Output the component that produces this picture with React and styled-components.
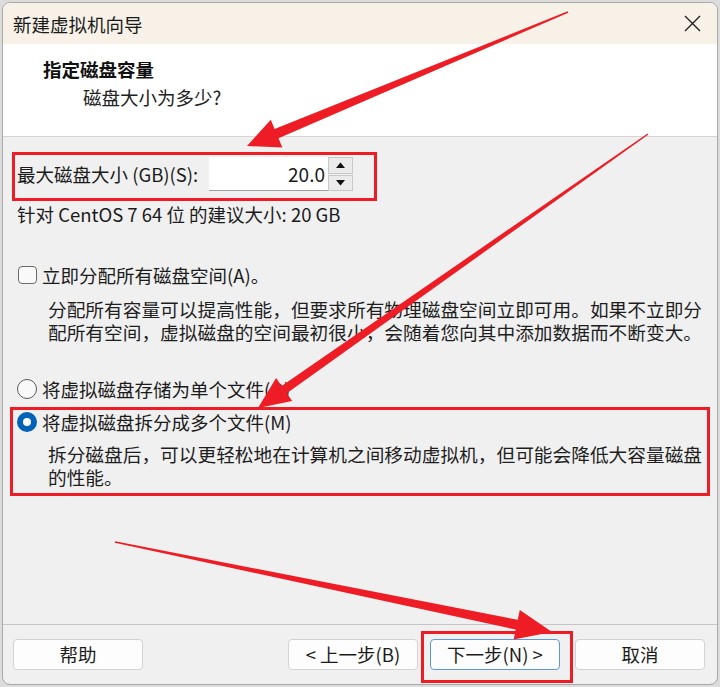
import React from 'react';
import styled, { createGlobalStyle } from 'styled-components';

const GlobalStyle = createGlobalStyle`
  html, body {
    margin: 0;
    padding: 0;
    background: #dcdcdc;
  }
  body {
    font-family: "Noto Sans CJK SC", "Noto Sans", sans-serif;
    color: #1b1b1b;
  }
  * {
    box-sizing: border-box;
  }
`;

const RED = '#ee1c24';

const Page = styled.div`
  width: 720px;
  height: 687px;
  padding: 2px 2px 0 2px;
  position: relative;
`;

const Window = styled.div`
  width: 716px;
  height: 683px;
  border: 1px solid #a9a9a9;
  border-radius: 8px;
  overflow: hidden;
  display: flex;
  flex-direction: column;
  background: #f0f0f0;
`;

const TitleBar = styled.div`
  height: 41px;
  flex: none;
  background: #f8f1e7;
  display: flex;
  align-items: center;
  justify-content: space-between;
  padding: 0 16px 0 10px;
  font-size: 18.5px;
  color: #1a1a1a;
`;

const CloseIcon = () => (
  <svg width="17" height="17" viewBox="0 0 17 17">
    <path d="M1 1 L16 16 M16 1 L1 16" stroke="#222" strokeWidth="1.4" fill="none" />
  </svg>
);

const Header = styled.div`
  height: 93px;
  flex: none;
  background: #ffffff;
  border-bottom: 1px solid #d4d4d4;
  padding: 13px 0 0 40px;
`;

const HeaderTitle = styled.div`
  font-size: 18.5px;
  font-weight: 700;
  line-height: 24px;
  color: #111;
`;

const HeaderSub = styled.div`
  font-size: 18.5px;
  line-height: 24px;
  margin: 4px 0 0 40px;
  color: #222;
`;

const Body = styled.div`
  flex: 1;
  display: flex;
  flex-direction: column;
  padding: 0 14px;
  font-size: 18.5px;
`;

const SizeRow = styled.div`
  margin-top: 20px;
  height: 34px;
  display: flex;
  align-items: center;
`;

const SizeLabel = styled.span`
  width: 192px;
  line-height: 24px;
`;

const NumberBox = styled.div`
  width: 119px;
  height: 34px;
  background: #fff;
  border-bottom: 1px solid #a0a0a0;
  text-align: right;
  padding-right: 3px;
  line-height: 33px;
  font-size: 19px;
`;

const Spinner = styled.div`
  width: 25px;
  height: 34px;
  display: flex;
  flex-direction: column;
  gap: 1px;
`;

const SpinButton = styled.div`
  flex: 1;
  background: #ebebeb;
  border: 1px solid #c9c9c9;
  display: flex;
  align-items: center;
  justify-content: center;
`;

const Tri = ({ up }) => (
  <svg width="9" height="6" viewBox="0 0 9 6">
    <path d={up ? 'M0 6 L4.5 0.5 L9 6 Z' : 'M0 0 L4.5 5.5 L9 0 Z'} fill="#111" />
  </svg>
);

const Line = styled.div`
  line-height: 24px;
  margin-top: ${p => p.$top || 0}px;
`;

const OptionRow = styled.div`
  display: flex;
  align-items: center;
  gap: 5px;
  height: 24px;
  margin-top: ${p => p.$top || 0}px;
`;

const CheckBox = styled.span`
  width: 19px;
  height: 18px;
  flex: none;
  border: 1px solid #6a6a6a;
  border-radius: 4px;
  background: #f9f9f9;
  margin-left: 1px;
`;

const Radio = styled.span`
  width: 20px;
  height: 20px;
  flex: none;
  border-radius: 50%;
  border: ${p => (p.$checked ? '6px solid #0063b8' : '1.5px solid #5a5a5a')};
  background: ${p => (p.$checked ? '#fff' : '#f9f9f9')};
`;

const Desc = styled.div`
  margin: ${p => p.$top || 0}px 0 0 31px;
  line-height: 23px;
  font-size: 18.7px;
  color: #1e1e1e;
`;

const Footer = styled.div`
  flex: none;
  height: 60px;
  border-top: 1px solid #c4c4c4;
  display: flex;
  align-items: flex-start;
  padding: 14px 12px 0 10px;
`;

const Button = styled.button`
  width: 130px;
  height: 31px;
  margin-left: ${p => p.$gap || 0}px;
  background: #fdfdfd;
  border: 1px solid ${p => (p.$primary ? '#5b9bd5' : '#d3d3d3')};
  border-radius: 4px;
  font-family: inherit;
  font-size: 18.5px;
  color: #1b1b1b;
  padding: 0;
  line-height: 29px;
`;

const Spacer = styled.div`
  flex: 1;
`;

const Overlay = styled.svg`
  position: absolute;
  top: 0;
  left: 0;
  pointer-events: none;
`;

function arrowPoints(x1, y1, x2, y2, headLen, headW, tailW, neckW) {
  const dx = x2 - x1;
  const dy = y2 - y1;
  const len = Math.hypot(dx, dy);
  const ux = dx / len;
  const uy = dy / len;
  const px = -uy;
  const py = ux;
  const bx = x2 - ux * headLen;
  const by = y2 - uy * headLen;
  const pts = [
    [x1 + px * tailW / 2, y1 + py * tailW / 2],
    [bx + px * neckW / 2, by + py * neckW / 2],
    [bx + px * headW / 2, by + py * headW / 2],
    [x2, y2],
    [bx - px * headW / 2, by - py * headW / 2],
    [bx - px * neckW / 2, by - py * neckW / 2],
    [x1 - px * tailW / 2, y1 - py * tailW / 2],
  ];
  return pts.map(p => p.map(v => v.toFixed(1)).join(',')).join(' ');
}

const arrows = [
  [568, 12, 247, 146, 32, 30, 1.5, 10],
  [648, 134, 258, 408, 32, 28, 1.5, 9],
  [115, 542, 552, 632, 36, 30, 1.5, 10],
];

const boxes = [
  [13.5, 153.5, 362, 46],
  [11.5, 408.5, 697, 86],
  [422.5, 632.5, 149, 49],
];

export default function App() {
  return (
    <Page>
      <GlobalStyle />
      <Window>
        <TitleBar>
          <span>新建虚拟机向导</span>
          <CloseIcon />
        </TitleBar>
        <Header>
          <HeaderTitle>指定磁盘容量</HeaderTitle>
          <HeaderSub>磁盘大小为多少?</HeaderSub>
        </Header>
        <Body>
          <SizeRow>
            <SizeLabel>最大磁盘大小 (GB)(S):</SizeLabel>
            <NumberBox>20.0</NumberBox>
            <Spinner>
              <SpinButton><Tri up /></SpinButton>
              <SpinButton><Tri /></SpinButton>
            </Spinner>
          </SizeRow>
          <Line $top={11}>针对 CentOS 7 64 位 的建议大小: 20 GB</Line>
          <OptionRow $top={37}>
            <CheckBox />
            <span>立即分配所有磁盘空间(A)。</span>
          </OptionRow>
          <Desc $top={10}>
            分配所有容量可以提高性能，但要求所有物理磁盘空间立即可用。如果不立即分
            <br />
            配所有空间，虚拟磁盘的空间最初很小，会随着您向其中添加数据而不断变大。
          </Desc>
          <OptionRow $top={34}>
            <Radio />
            <span>将虚拟磁盘存储为单个文件(O)</span>
          </OptionRow>
          <OptionRow $top={9}>
            <Radio $checked />
            <span>将虚拟磁盘拆分成多个文件(M)</span>
          </OptionRow>
          <Desc $top={8}>
            拆分磁盘后，可以更轻松地在计算机之间移动虚拟机，但可能会降低大容量磁盘
            <br />
            的性能。
          </Desc>
          <Spacer />
        </Body>
        <Footer>
          <Button>帮助</Button>
          <Spacer />
          <Button>&lt; 上一步(B)</Button>
          <Button $gap={12} $primary>下一步(N) &gt;</Button>
          <Button $gap={15}>取消</Button>
        </Footer>
      </Window>
      <Overlay width="720" height="687" viewBox="0 0 720 687">
        {boxes.map(([x, y, w, h], i) => (
          <rect key={i} x={x} y={y} width={w} height={h} fill="none" stroke={RED} strokeWidth="3" />
        ))}
        {arrows.map((a, i) => (
          <polygon key={i} points={arrowPoints(...a)} fill={RED} />
        ))}
      </Overlay>
    </Page>
  );
}
